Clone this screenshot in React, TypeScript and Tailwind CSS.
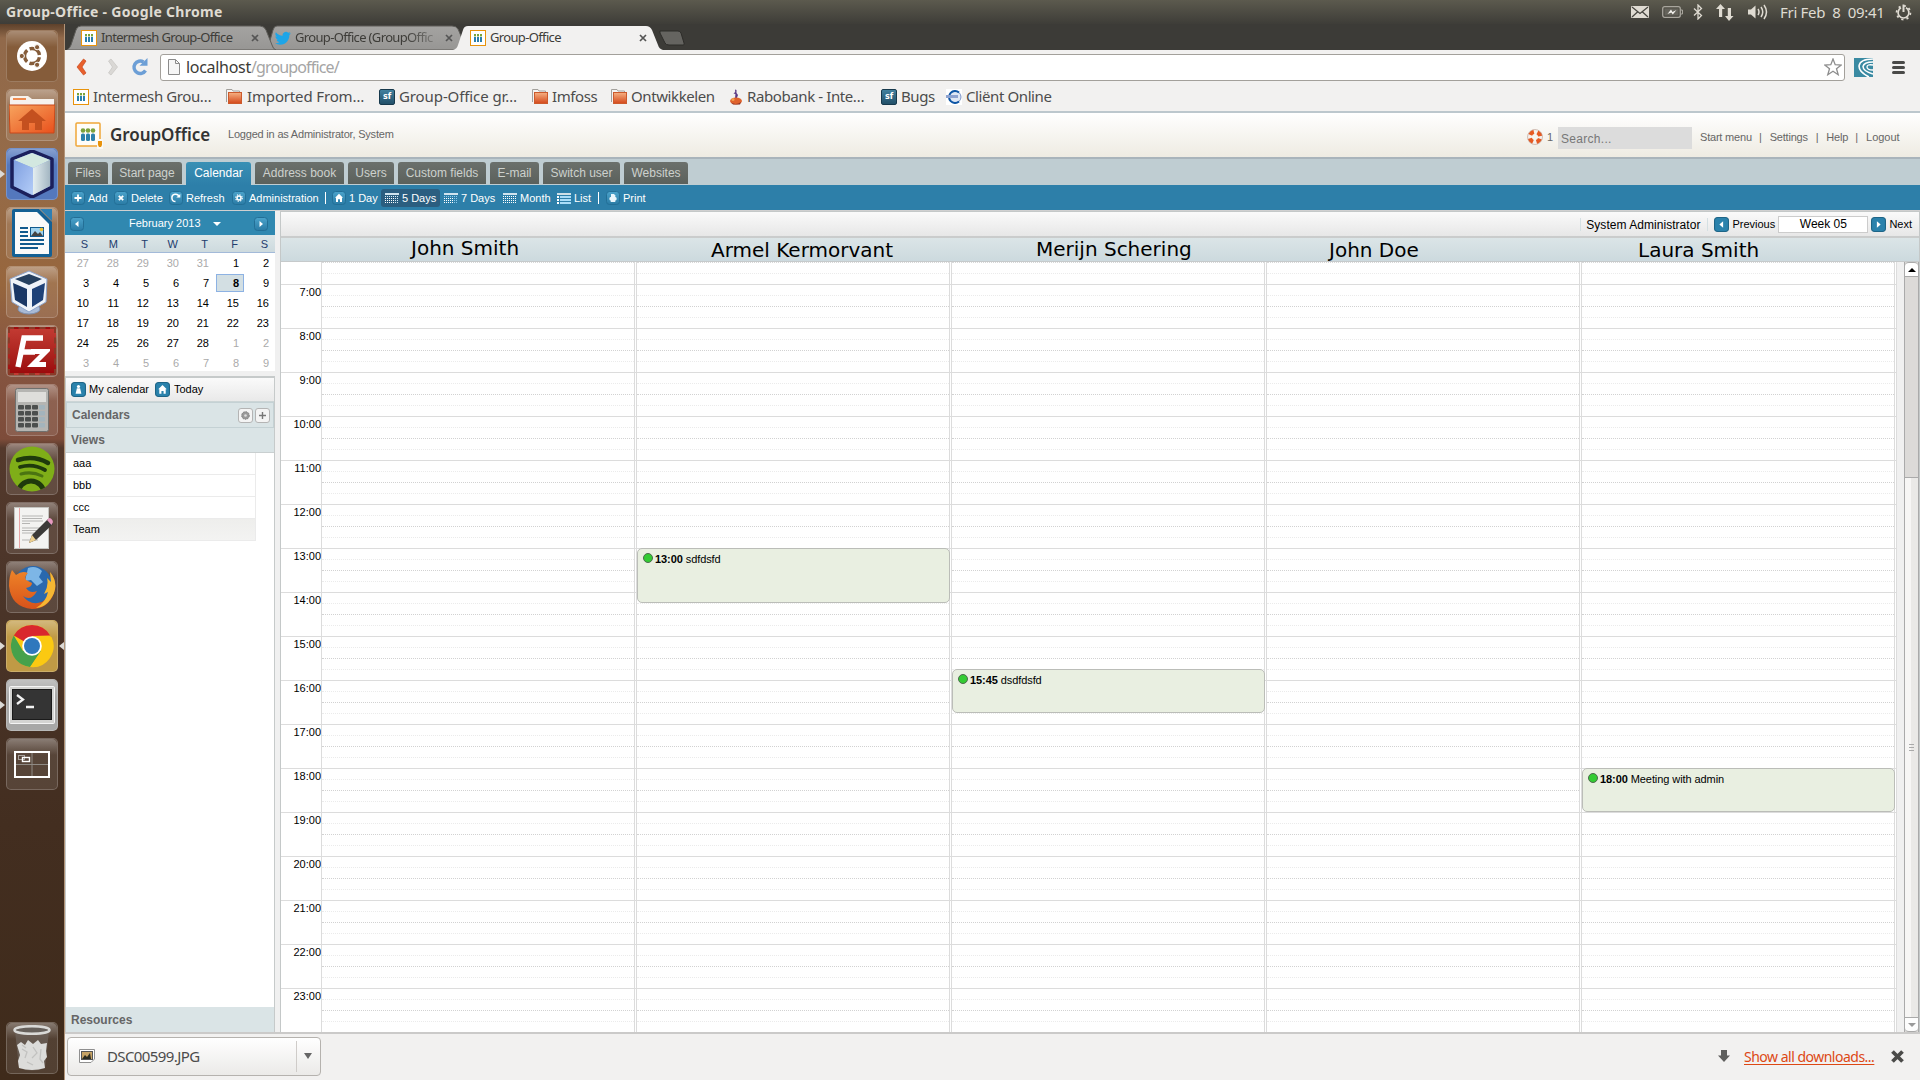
import React from "react";

const UI = "font-['Noto_Sans',sans-serif]";
const HOURS = [7, 8, 9, 10, 11, 12, 13, 14, 15, 16, 17, 18, 19, 20, 21, 22, 23];

/* ---------- Small icons ---------- */

function PeopleIcon({ size = 16 }: { size?: number }) {
  return (
    <svg width={size} height={size} viewBox="0 0 16 16" className="shrink-0">
      <rect x="0.5" y="0.5" width="15" height="15" fill="#fff" stroke="#e8930c" />
      {[4, 7, 10].map((x) => (
        <g key={x}>
          <rect x={x} y="4" width="2" height="2.4" fill="#7aa33a" />
          <rect x={x} y="7" width="2" height="5" fill="#2a7fae" />
        </g>
      ))}
    </svg>
  );
}

function TwitterIcon() {
  return (
    <svg width="16" height="16" viewBox="0 0 24 24" className="shrink-0" fill="#1da5e8">
      <path d="M23.6 4.9c-.9.4-1.8.7-2.8.8 1-.6 1.8-1.6 2.1-2.7-.9.6-2 1-3.1 1.2A4.9 4.9 0 0 0 11.500 8.700 13.900 13.900 0 0 1 1.400 3.500a4.900 4.900 0 0 0 1.500 6.600c-.8 0-1.600-.2-2.200-.6v.1c0 2.300 1.700 4.300 3.900 4.800-.7.2-1.500.2-2.200.1.6 2 2.400 3.400 4.600 3.400A9.900 9.900 0 0 1 0 19.900a13.900 13.900 0 0 0 7.500 2.200c9.100 0 14-7.500 14-14v-.6c1-.7 1.800-1.600 2.100-2.600z" />
    </svg>
  );
}

function FolderIcon() {
  return (
    <svg width="16" height="15" viewBox="0 0 16 15" className="shrink-0">
      <defs>
        <linearGradient id="bf" x1="0" y1="0" x2="0" y2="1">
          <stop offset="0" stopColor="#f6b183" />
          <stop offset="1" stopColor="#d4481a" />
        </linearGradient>
      </defs>
      <path d="M0.5 13V0.5H6L7 2H13.5V6" fill="#f4f3f2" stroke="#a3a09c" />
      <rect x="2.5" y="3.5" width="13" height="11" fill="url(#bf)" stroke="#cc5a2c" />
    </svg>
  );
}

function SfIcon() {
  return (
    <span className="flex h-4 w-4 shrink-0 items-center justify-center rounded-[2px] border border-[#17394d] bg-linear-to-b from-[#41819f] to-[#235069] font-['DejaVu_Sans',sans-serif] text-[8px] leading-none font-bold tracking-normal text-white">
      sf
    </span>
  );
}

function RaboIcon() {
  return (
    <svg width="14" height="16" viewBox="0 0 14 16" className="shrink-0">
      <path d="M6 0.5L7.5 1V4L9 6L7.5 10H6L6.4 5L4.5 4.5L6.2 3z" fill="#5b3a86" />
      <ellipse cx="7" cy="12" rx="6" ry="3.5" fill="#e0622c" />
      <path d="M2 13.5Q7 16.5 12 13L11 15.5H4z" fill="#8e3325" />
      <circle cx="4" cy="10.5" r="1.5" fill="#f0a050" />
    </svg>
  );
}

function ClientIcon() {
  return (
    <svg width="16" height="16" viewBox="0 0 16 16" className="shrink-0">
      <rect width="16" height="16" fill="#fff" />
      <circle cx="9" cy="8" r="6" fill="#dfe7f4" stroke="#7b93c8" strokeWidth="1" />
      <path d="M13 3.5A6 6 0 1 0 13 12.5" fill="none" stroke="#0d55a5" strokeWidth="2" />
      <rect x="0" y="6" width="12" height="3" fill="#8ea3d0" />
    </svg>
  );
}

function CloseX() {
  return (
    <svg width="8" height="8" viewBox="0 0 8 8" className="shrink-0" stroke="#555" strokeWidth="1.7">
      <path d="M1 1L7 7M7 1L1 7" />
    </svg>
  );
}

type Glyph = "add" | "delete" | "refresh" | "gear" | "home" | "print" | "prev" | "next" | "user";

function BlueButton({ glyph, size = 14, bright = false }: { glyph: Glyph; size?: number; bright?: boolean }) {
  return (
    <svg width={size} height={size} viewBox="0 0 14 14" className="shrink-0">
      <defs>
        <linearGradient id="bb" x1="0" y1="0" x2="0" y2="1">
          <stop offset="0" stopColor="#4ba3cb" />
          <stop offset="1" stopColor="#2a7ba5" />
        </linearGradient>
      </defs>
      <rect x="0.5" y="0.5" width="13" height="13" rx="3" fill={bright ? "#2a82ac" : "url(#bb)"} stroke={bright ? "#1e6587" : "#236f96"} />
      {glyph === "add" && <path d="M7 3.500V10.500M3.500 7H10.500" stroke="#fff" strokeWidth="1.8" />}
      {glyph === "delete" && <path d="M4.800 4.800L9.200 9.200M9.200 4.800L4.800 9.200" stroke="#fff" strokeWidth="1.8" />}
      {glyph === "refresh" && (
        <g>
          <path d="M6.500 10.500A3.600 3.600 0 1 1 10 6" fill="none" stroke="#fff" strokeWidth="1.5" />
          <path d="M7.300 6.500H11.300V3z" fill="#fff" />
        </g>
      )}
      {glyph === "gear" && (
        <g fill="none" stroke="#fff">
          <circle cx="7" cy="7" r="2" strokeWidth="1.5" />
          <circle cx="7" cy="7" r="3.3" strokeWidth="1.1" strokeDasharray="1.3 1.29" />
        </g>
      )}
      {glyph === "home" && <path d="M7 2.800L11 6.800H10V11H8V8.300H6V11H4V6.800H3z" fill="#fff" />}
      {glyph === "print" && (
        <g fill="#eaf6fc">
          <path d="M5 3H8L9.300 4.500V6H5z" />
          <rect x="3.5" y="6" width="7" height="3.5" rx="1.3" />
          <rect x="4.7" y="9" width="4.6" height="2" />
        </g>
      )}
      {glyph === "prev" && <path d="M8.500 4V10L5 7z" fill="#fff" />}
      {glyph === "next" && <path d="M5.500 4V10L9 7z" fill="#fff" />}
      {glyph === "user" && (
        <g fill="#fff">
          <circle cx="7" cy="4.2" r="1.5" />
          <path d="M5.500 5.800H8.500L9.700 11H4.300z" />
        </g>
      )}
    </svg>
  );
}

function GridIcon({ tint }: { tint: string }) {
  return (
    <svg width="14" height="11" viewBox="0 0 14 11" className="shrink-0" shapeRendering="crispEdges">
      <rect width="14" height="2" fill="#cfe3ee" />
      {[3, 5, 7, 9].map((y, r) =>
        [0, 2, 4, 6, 8, 10, 12].map((x, c) => (
          <rect key={`${x}-${y}`} x={x} y={y} width="1" height="1" fill={r > 0 && c < 5 ? "#fff" : tint} />
        ))
      )}
    </svg>
  );
}

function ListIcon() {
  return (
    <svg width="14" height="11" viewBox="0 0 14 11" className="shrink-0">
      <rect width="14" height="2" fill="#cfdfe6" />
      {[3, 6, 9].map((y) => (
        <g key={y}>
          <rect y={y} width="2" height="2" fill="#fff" />
          <rect x="3" y={y} width="11" height="2" fill="#a9dcf8" />
        </g>
      ))}
    </svg>
  );
}

/* ---------- Desktop chrome ---------- */

function TopPanel() {
  return (
    <div className={`flex h-6 items-center bg-linear-to-b from-[#5c5a4e] to-[#3e3d38] pl-[6px] text-[#dfdbd2] ${UI}`}>
      <span className="w-[1625px] text-[14px] leading-[20px] font-bold tracking-[0.3px] whitespace-nowrap">
        Group-Office - Google Chrome
      </span>
      <svg width="18" height="12" viewBox="0 0 18 12">
        <rect width="18" height="12" rx="1" fill="#dfdbd2" />
        <path d="M1 1L9 7.500L17 1M1 11L6.500 6M17 11L11.500 6" fill="none" stroke="#45443e" strokeWidth="1.2" />
      </svg>
      <svg width="21" height="12" viewBox="0 0 21 12" className="ml-[13px]">
        <rect x="0.7" y="0.7" width="17.6" height="10.6" rx="2" fill="none" stroke="#a8a59d" strokeWidth="1.3" />
        <rect x="2.5" y="2.5" width="14" height="7" fill="#65635b" />
        <path d="M19 4H20.500V8H19" fill="none" stroke="#a8a59d" />
        <path d="M5.500 8L9 3.500L10.500 6L14.500 4L10.800 8.500L9.300 6.500z" fill="#f4f2ee" />
      </svg>
      <svg width="10" height="16" viewBox="0 0 10 16" className="ml-[10px]" fill="none" stroke="#dfdbd2" strokeWidth="1.3">
        <path d="M1 4.500L8.500 11.500L5 15V1L8.500 4.500L1 11.500" />
      </svg>
      <svg width="18" height="17" viewBox="0 0 18 17" className="ml-[13px]" fill="#dfdbd2">
        <path d="M4.500 0L9 5H6.200V13H3V5H0z" />
        <path d="M13 17L17.500 12H15V4H11.800V12H9z" />
      </svg>
      <svg width="21" height="16" viewBox="0 0 21 16" className="ml-[14px]">
        <path d="M0 5.500H3L7.500 1.500V14.500L3 10.500H0z" fill="#dfdbd2" />
        <path d="M10 5Q12 8 10 11M13 3Q16.500 8 13 13M16 1Q21 8 16 15" fill="none" stroke="#dfdbd2" strokeWidth="1.5" />
      </svg>
      <span className="ml-[11px] w-[105px] text-[15px] leading-[20px] tracking-[-0.3px] whitespace-pre">Fri Feb  8  09:41</span>
      <svg width="17" height="17" viewBox="0 0 17 17" className="ml-[10px]" fill="none" stroke="#dfdbd2">
        <circle cx="8.5" cy="8.7" r="6.9" strokeWidth="1.8" strokeDasharray="2.2 3.22" />
        <path d="M6 3.800A5.400 5.400 0 1 0 11 3.800" strokeWidth="1.7" />
        <path d="M8.500 0.500V8" strokeWidth="2" />
      </svg>
    </div>
  );
}

function Tile({ children, bg = "bg-white/10", left, right }: { children: React.ReactNode; bg?: string; left?: boolean; right?: boolean }) {
  return (
    <div className={`relative flex h-[52px] w-[52px] shrink-0 items-center justify-center rounded-[5px] border border-white/20 ${bg}`}>
      <div className="absolute inset-x-0 top-0 h-4 rounded-t-[5px] bg-linear-to-b from-white/30 to-transparent" />
      <div className="relative">{children}</div>
      {left && <div className="absolute top-[21px] -left-[7px] border-y-4 border-l-5 border-y-transparent border-l-[#dcdad6]" />}
      {right && <div className="absolute top-[21px] -right-[7px] border-y-4 border-r-5 border-y-transparent border-r-[#dcdad6]" />}
    </div>
  );
}

function Launcher() {
  return (
    <aside className="flex w-[65px] shrink-0 flex-col items-start gap-[7px] border-r border-[#b29478] bg-[linear-gradient(180deg,#5d412b_0px,#91694a_14px,#956b48_150px,#97663d_260px,#875642_330px,#7d4c3a_415px,#54392c_424px,#4b3529_560px,#432e20_800px,#3f2b1b_1056px)] pt-[6px] pl-[6px]">
      <Tile bg="bg-[#855c3a]">
        <svg width="32" height="32" viewBox="0 0 32 32">
          <circle cx="16" cy="16" r="15" fill="#fff" />
          <circle cx="16" cy="16" r="7.5" fill="none" stroke="#855c3a" strokeWidth="3.4" strokeDasharray="13 2.7" strokeDashoffset="-1.3" />
          {[[5.8, 16], [21.1, 7.2], [21.1, 24.8]].map(([x, y]) => (
            <circle key={`${x}${y}`} cx={x} cy={y} r="2.6" fill="#855c3a" stroke="#fff" strokeWidth="1" />
          ))}
        </svg>
      </Tile>
      <Tile>
        <svg width="46" height="40" viewBox="0 0 46 40">
          <defs>
            <linearGradient id="lf" x1="0" y1="0" x2="1" y2="1">
              <stop offset="0" stopColor="#f7a45e" />
              <stop offset="1" stopColor="#e9501c" />
            </linearGradient>
          </defs>
          <path d="M1 12V3Q1 1 3 1H19L23 4H45V12z" fill="#f6f2ee" />
          <rect x="4" y="3" width="13" height="2" fill="#ee8a50" />
          <path d="M0 10H46L45 38H1z" fill="url(#lf)" stroke="#c8481a" />
          <path d="M23 14L37 26H33V35H26V28H20V35H13V26H9z" fill="#c4501f" />
        </svg>
      </Tile>
      <Tile bg="bg-[#5478bd]" left>
        <svg width="46" height="48" viewBox="0 0 46 48">
          <defs>
            <linearGradient id="nbl" x1="0" y1="0" x2="1" y2="1">
              <stop offset="0" stopColor="#7f9fe0" />
              <stop offset="1" stopColor="#b4cdf8" />
            </linearGradient>
            <linearGradient id="nbr" x1="0" y1="0" x2="1" y2="0">
              <stop offset="0" stopColor="#e4eef0" />
              <stop offset="1" stopColor="#a3b6c2" />
            </linearGradient>
          </defs>
          <path d="M23 1L43 9V37L23 47L3 37V9z" fill="#8aa8e0" stroke="#1b1f5c" strokeWidth="3.5" strokeLinejoin="round" />
          <path d="M23 3L41 10L24 18L5 10z" fill="#d3e8e0" />
          <path d="M5 10L24 18V45L5 36z" fill="url(#nbl)" />
          <path d="M41 10L24 18V45L41 36z" fill="url(#nbr)" />
        </svg>
      </Tile>
      <Tile>
        <svg width="40" height="48" viewBox="0 0 40 48">
          <path d="M2 0H27L40 13V46Q40 48 38 48H2Q0 48 0 46V2Q0 0 2 0z" fill="#146094" />
          <path d="M3 3H25L37 15V45H3z" fill="#fafafa" />
          <path d="M28 0H40V12z" fill="#2f7fb3" />
          <path d="M8 19H16M8 23H16M8 27H16M8 31H32M8 35H32M8 39H26" stroke="#115a8e" strokeWidth="2" />
          <rect x="18.5" y="18.5" width="13" height="9" fill="#9fd2ef" stroke="#115a8e" />
          <path d="M19 27L23 22L26 25L28 23L31 27z" fill="#444" />
          <circle cx="29.5" cy="20.5" r="1.8" fill="#f1c232" />
        </svg>
      </Tile>
      <Tile>
        <svg width="40" height="45" viewBox="0 0 40 45" className="mr-[6px]">
          <ellipse cx="20" cy="39" rx="11" ry="5" fill="#a9bad6" stroke="#7d91b4" />
          <path d="M20 1L38 9L37 32L20 42L3 32L1 9z" fill="#eff3f9" stroke="#8ea5cc" />
          <path d="M20 4L33 9L20 15L6 9z" fill="#26405f" />
          <path d="M4 13L18 19V37L6 30z" fill="#1a3765" />
          <path d="M36 13L23 19V37L34 30z" fill="#1f4278" />
        </svg>
      </Tile>
      <Tile>
        <div className="flex h-12 w-12 items-center justify-center border-2 border-dashed border-[#8b3a28] bg-linear-to-b from-[#c23a32] to-[#9c0a0c]">
          <svg width="36" height="36" viewBox="0 0 36 36" fill="none" stroke="#fff" strokeWidth="5.5">
            <path d="M4 34L10 5H29M7 19H21" />
            <path d="M17 18.500H32L19 31.500H32" strokeWidth="5" />
          </svg>
        </div>
      </Tile>
      <Tile>
        <svg width="34" height="44" viewBox="0 0 34 44">
          <rect x="0.5" y="0.5" width="33" height="43" rx="2" fill="#b5b5b2" stroke="#70706e" />
          <rect x="3" y="4" width="28" height="10" fill="#dededb" />
          {[17, 23, 29, 35].map((y) =>
            [3, 10, 17, 24].map((x) => (
              <rect key={`${x}${y}`} x={x} y={y} width="6" height="4.5" rx="1" fill={x === 24 ? "#a3b4bc" : "#4c4f4e"} />
            ))
          )}
        </svg>
      </Tile>
      <Tile>
        <svg width="46" height="46" viewBox="0 0 46 46">
          <defs>
            <clipPath id="sp"><circle cx="23" cy="23" r="22.5" /></clipPath>
          </defs>
          <circle cx="23" cy="23" r="22.5" fill="#7fae18" />
          <g fill="none" stroke="#1f3a0c" strokeLinecap="round" clipPath="url(#sp)">
            <path d="M9 14Q25 9 39 17" strokeWidth="4.5" />
            <path d="M11 21Q24 17 36 24" strokeWidth="3.8" />
            <path d="M12 28Q23 25 33 30" strokeWidth="3" stroke="#4b7411" />
            <circle cx="22" cy="48" r="13" strokeWidth="5" />
          </g>
        </svg>
      </Tile>
      <Tile>
        <svg width="40" height="42" viewBox="0 0 40 42" className="ml-[3px]">
          <rect x="0.5" y="0.5" width="34" height="41" fill="#f3f3f1" stroke="#c4c4c0" />
          <path d="M5.500 1V41" stroke="#e7a5a5" />
          <path d="M8 9H29M8 11.500H28M8 14H29M8 16.500H16M8 21H28M8 23.500H28M8 26H20M8 33H24" stroke="#b5b5b3" />
          <path d="M15 36L18 28L34 12L39 17L22 33z" fill="#3b3a38" />
          <path d="M15 36L18 28L22 33z" fill="#eccf8f" />
          <path d="M33 13L35 11Q38 11 39 15L37.500 18z" fill="#e79ac0" />
        </svg>
      </Tile>
      <Tile>
        <svg width="48" height="46" viewBox="0 0 48 46">
          <defs>
            <linearGradient id="ffx" x1="0" y1="0" x2="0" y2="1">
              <stop offset="0" stopColor="#ee8428" />
              <stop offset="1" stopColor="#d8521a" />
            </linearGradient>
          </defs>
          <circle cx="25" cy="21" r="19" fill="#2968ae" />
          <path d="M20 4Q28 1 34 7L31 13L35 18L29 22L23 16L17 17z" fill="#7db6e6" />
          <path d="M4 6L8 11Q14 6 20 9Q16 12 18 16L24 19Q24 23 18 24Q22 30 29 27Q23 38 15 32Q22 42 34 38Q43 33 44 17Q45 12 42 8Q50 18 46 29Q40 45 24 45Q3 43 1 22Q1 12 4 6z" fill="url(#ffx)" />
          <path d="M42 8Q50 18 46 29Q40 43 28 44Q38 38 40 28L36 30Q41 22 39 14L43 18z" fill="#f5b733" />
        </svg>
      </Tile>
      <Tile bg="bg-[#c09a45]" left right>
        <svg width="44" height="44" viewBox="0 0 44 44">
          <circle cx="22" cy="22" r="21" fill="#fbc912" />
          <path d="M22 22L3.800 11.500A21 21 0 0 1 40.200 11.500L22 12z" fill="#d9272e" />
          <path d="M3.800 11.500A21 21 0 0 0 20 43L31 27L22 22L13 27z" fill="#46a14b" />
          <path d="M31 27L20.500 43A21 21 0 0 0 41.500 13H22z" fill="#fbc912" />
          <circle cx="22" cy="22" r="9.8" fill="#fff" />
          <circle cx="22" cy="22" r="8" fill="#2f78bd" />
        </svg>
      </Tile>
      <Tile bg="bg-[#a8a8a7]" left>
        <svg width="46" height="38" viewBox="0 0 46 38">
          <rect x="0.5" y="0.5" width="45" height="37" rx="1" fill="#d4d4d2" stroke="#f4f4f4" />
          <rect x="3.5" y="3.5" width="39" height="30" fill="#343434" stroke="#1b1b1b" />
          <path d="M8 9L14 13.500L8 18M17 21H25" fill="none" stroke="#f2f2f2" strokeWidth="2.3" />
        </svg>
      </Tile>
      <Tile>
        <svg width="36" height="27" viewBox="0 0 36 27" fill="none">
          <path d="M18 1V26M1 13.500H35" stroke="#8f8a84" />
          <rect x="1" y="1" width="34" height="25" stroke="#fff" strokeWidth="2" />
          <rect x="4.5" y="4.5" width="6" height="4" stroke="#a8a29c" />
          <rect x="8.5" y="6.5" width="7" height="4" stroke="#fff" strokeWidth="1.4" />
        </svg>
      </Tile>
      <div className="mt-auto mb-[6px]">
        <Tile>
          <svg width="38" height="46" viewBox="0 0 38 46">
            <path d="M2 6L6 43Q19 48 32 43L36 6z" fill="#6d645c" fillOpacity="0.7" />
            <path d="M4 20L8 17L12 20L15 15L20 19L25 15L28 19L34 18L33 26L34 32L31 36L32 43Q19 47 6 43L5 36L7 30z" fill="#dcdcda" />
            <path d="M9 24L14 27L12 33M20 22L24 28L19 33M28 24L27 34L30 38M14 37L20 40M9 20L13 23" fill="none" stroke="#c2c2c0" strokeWidth="1.3" />
            <ellipse cx="19" cy="5" rx="17.5" ry="3.8" fill="#66605b" stroke="#d9d9d7" strokeWidth="2.5" />
          </svg>
        </Tile>
      </div>
    </aside>
  );
}

/* ---------- Browser ---------- */

function BrowserTabs() {
  return (
    <div className={`relative flex h-[26px] items-center bg-[#3c3b37] pt-[2px] text-[13px] tracking-[-0.65px] text-[#3d3c38] ${UI}`}>
      <svg width="640" height="26" viewBox="0 0 640 26" className="absolute top-0 left-0">
        <defs>
          <linearGradient id="tb" x1="0" y1="0" x2="0" y2="1">
            <stop offset="0" stopColor="#a4a3a1" />
            <stop offset="1" stopColor="#979694" />
          </linearGradient>
        </defs>
        <path d="M199 26Q203 24 204 20L208 6Q209 2 212 2H387Q391 2 393 5L402 26z" fill="url(#tb)" stroke="#5e5d59" />
        <path d="M2 26Q5 24 6 21L11 6Q12 2 16 2H195Q199 2 201 6L207 21Q208 25 211 26z" fill="url(#tb)" stroke="#5e5d59" />
        <path d="M388 26Q392 25 393 21L398 6Q399 2 403 2H581Q585 2 587 6L593 21Q594 25 598 26z" fill="#f2f1f0" />
        <path d="M595 7H613Q615 7 616 9L619 19Q620 21 618 21H604Q601 21 600 19L595 9z" fill="#656460" stroke="#2d2c29" />
      </svg>
      <div className="relative ml-[16px] flex w-[194px] items-center">
        <PeopleIcon />
        <span className="ml-[4px] w-[150px] whitespace-nowrap">Intermesh Group-Office</span>
        <CloseX />
      </div>
      <div className="relative flex w-[195px] items-center">
        <TwitterIcon />
        <span className="ml-[4px] w-[142px] [mask-image:linear-gradient(90deg,#000_78%,rgba(0,0,0,0.25))] whitespace-nowrap">
          Group-Office (GroupOffic
        </span>
        <span className="ml-[8px] flex"><CloseX /></span>
      </div>
      <div className="relative flex items-center">
        <PeopleIcon />
        <span className="ml-[4px] w-[149px] whitespace-nowrap">Group-Office</span>
        <CloseX />
      </div>
    </div>
  );
}

function AddressBar() {
  return (
    <div className={`flex h-[34px] items-center bg-[#f2f1f0] ${UI}`}>
      <svg width="12" height="18" viewBox="0 0 12 18" className="ml-[11px]">
        <path d="M7.500 1L10 3L6 9L10 15L7.500 17L1 9z" fill="#e8602c" stroke="#c9481c" strokeWidth="0.7" />
      </svg>
      <svg width="12" height="18" viewBox="0 0 12 18" className="ml-[19px]">
        <path d="M4 1L1.500 3L5.500 9L1.500 15L4 17L10.500 9z" fill="#dad8d5" stroke="#c6c4c1" strokeWidth="0.7" />
      </svg>
      <svg width="18" height="18" viewBox="0 0 18 18" className="ml-[12px]">
        <path d="M14.500 12.500A6.200 6.200 0 1 1 12.500 4" fill="none" stroke="#6d9fd6" strokeWidth="3.4" />
        <path d="M8.500 7.800H16.500V0z" fill="#6d9fd6" />
      </svg>
      <div className="ml-[11px] flex h-[27px] w-[1685px] items-center rounded-[3px] border border-[#a3a09b] bg-white text-[16px] text-[#3c3b37]">
        <svg width="12" height="16" viewBox="0 0 12 16" className="ml-[7px]">
          <path d="M0.500 0.500H7.500L11.500 4.500V15.500H0.500z" fill="#f6f6f6" stroke="#8b8b8b" />
          <path d="M7.500 0.500V4.500H11.500" fill="none" stroke="#8b8b8b" />
        </svg>
        <span className="ml-[6px] grow tracking-[-0.3px]">
          localhost<span className="tracking-[-0.85px] text-[#a5a5a5]">/groupoffice/</span>
        </span>
        <svg width="18" height="18" viewBox="0 0 18 18" className="mr-[2px]">
          <path d="M9 1L11.200 6.700L17.300 7L12.500 10.800L14.200 16.700L9 13.300L3.800 16.700L5.500 10.800L0.700 7L6.800 6.700z" fill="#fff" stroke="#8d8d8d" strokeWidth="1.3" />
        </svg>
      </div>
      <svg width="19" height="19" viewBox="0 0 19 19" className="ml-[9px]">
        <rect width="19" height="19" fill="#3a8aa2" />
        <g fill="none" stroke="#fff">
          <path d="M19 1Q6 1 5 8Q5 14 15 19" strokeWidth="1.6" />
          <path d="M19 4Q10 4 9 8.500Q9 13 19 16" strokeWidth="1.5" />
          <path d="M19 7Q13 6 13 9Q13 12 19 12" strokeWidth="1.3" />
        </g>
      </svg>
      <div className="ml-[19px] flex w-[13px] flex-col gap-[2px]">
        <div className="h-[3px] rounded-xs bg-[#4a4a48]" />
        <div className="h-[3px] rounded-xs bg-[#4a4a48]" />
        <div className="h-[3px] rounded-xs bg-[#4a4a48]" />
      </div>
    </div>
  );
}

function Bookmark({ icon, label, width }: { icon: React.ReactNode; label: string; width: string }) {
  return (
    <div className={`flex items-center gap-[4px] whitespace-nowrap ${width}`}>
      {icon}
      <span>{label}</span>
    </div>
  );
}

function Bookmarks() {
  return (
    <div className={`flex h-[29px] items-center border-b-2 border-[#bcc7cd] bg-[#f2f1f0] pb-[2px] pl-[8px] text-[15px] tracking-[-0.4px] text-[#4c4c4c] ${UI}`}>
      <Bookmark icon={<PeopleIcon />} label="Intermesh Grou…" width="w-[153px]" />
      <Bookmark icon={<FolderIcon />} label="Imported From…" width="w-[153px] tracking-[-0.15px] gap-[5px]" />
      <Bookmark icon={<SfIcon />} label="Group-Office gr…" width="w-[153px] tracking-[-0.1px]" />
      <Bookmark icon={<FolderIcon />} label="Imfoss" width="w-[79px]" />
      <Bookmark icon={<FolderIcon />} label="Ontwikkelen" width="w-[118px]" />
      <Bookmark icon={<RaboIcon />} label="Rabobank - Inte…" width="w-[152px]" />
      <Bookmark icon={<SfIcon />} label="Bugs" width="w-[65px]" />
      <Bookmark icon={<ClientIcon />} label="Cliënt Online" width="w-[120px]" />
    </div>
  );
}

/* ---------- Groupware page ---------- */

function PageHeader() {
  return (
    <header className="flex h-[46px] items-center border-b-2 border-[#a9b4bb] bg-linear-to-b from-white to-[#eeebe2] text-[11px] tracking-[-0.2px] text-[#666]">
      <svg width="28" height="27" viewBox="0 0 28 27" className="mt-[1px] ml-[10px]">
        <rect x="1" y="1" width="24" height="23" rx="1" fill="#fffdf9" stroke="#f0a637" strokeWidth="1.5" />
        {[7.5, 12.5, 17.5].map((x) => (
          <g key={x}>
            <circle cx={x + 0.5} cy="8.5" r="2.3" fill="#7da23d" />
            <rect x={x - 1.5} y="11.5" width="4" height="7.5" rx="1.5" fill="#2d81ab" />
          </g>
        ))}
        <rect x="22" y="17" width="6" height="10" fill="#fbf9f4" />
        <path d="M23 19H27V23L26 25H24L23 23z" fill="#e8930c" />
      </svg>
      <span className="ml-[7px] w-[118px] font-['Noto_Sans',sans-serif] text-[17px] font-semibold tracking-[-0.05px] text-[#333]">GroupOffice</span>
      <span className="grow pb-[2px]">Logged in as Administrator, System</span>
      <svg width="16" height="16" viewBox="0 0 16 16" className="mt-[4px]" fill="none">
        <circle cx="8" cy="8" r="5.3" stroke="#f5f0ec" strokeWidth="4.6" />
        <circle cx="8" cy="8" r="5.3" stroke="#e65a22" strokeWidth="4.2" strokeDasharray="4.6 3.72" strokeDashoffset="-1.9" />
        <circle cx="8" cy="8" r="7.5" stroke="#b9988c" strokeWidth="0.6" />
      </svg>
      <span className="mt-[4px] ml-[4px] w-[11px]">1</span>
      <div className="mt-[5px] flex h-[22px] w-[134px] items-center bg-[#dcdcdc] pt-[2px] pl-[3px] text-[12px] tracking-[0.3px] text-[#777]">Search...</div>
      <div className="mt-[4px] ml-[8px] flex w-[220px] gap-[8px]">
        <span className="w-[51px] whitespace-nowrap">Start menu</span>
        <span>|</span>
        <span className="w-[39px]">Settings</span>
        <span className="-ml-[1px]">|</span>
        <span className="w-[21px]">Help</span>
        <span>|</span>
        <span className="tracking-normal">Logout</span>
      </div>
    </header>
  );
}

const MODULES: [string, string][] = [
  ["Files", "w-[40px]"],
  ["Start page", "w-[70px]"],
  ["Calendar", "w-[65px]"],
  ["Address book", "w-[89px]"],
  ["Users", "w-[46px]"],
  ["Custom fields", "w-[88px]"],
  ["E-mail", "w-[49px]"],
  ["Switch user", "w-[77px]"],
  ["Websites", "w-[64px]"],
];

function ModuleTabs() {
  return (
    <nav className="flex h-[26px] items-end gap-[4px] bg-[#bfcdd2] pl-[3px] text-[12px]">
      {MODULES.map(([label, width]) => (
        <div
          key={label}
          className={`flex items-center justify-center rounded-t-[3px] whitespace-nowrap ${width} ${
            label === "Calendar"
              ? "h-[23px] bg-linear-to-b from-[#3990b5] to-[#2d7fa9] pb-px text-white"
              : "mb-px h-[22px] bg-linear-to-b from-[#6b706c] to-[#5b615c] text-[#cdd1cd]"
          }`}
        >
          {label}
        </div>
      ))}
    </nav>
  );
}

function Action({ icon, label, width, active }: { icon: React.ReactNode; label: string; width: string; active?: boolean }) {
  return (
    <div className={`flex items-center gap-[3px] whitespace-nowrap ${width} ${active ? "-mx-[4px] h-[18px] rounded-[3px] bg-[#2b5e80] px-[4px]" : ""}`}>
      {icon}
      <span>{label}</span>
    </div>
  );
}

function ActionBar() {
  return (
    <div className="flex h-[26px] items-center border-b border-[#d0d0d0] bg-[#2d7fa9] pt-px pl-[6px] text-[11px] text-white">
      <Action icon={<BlueButton glyph="add" />} label="Add" width="w-[43px]" />
      <Action icon={<BlueButton glyph="delete" />} label="Delete" width="w-[55px]" />
      <Action icon={<BlueButton glyph="refresh" />} label="Refresh" width="w-[63px]" />
      <Action icon={<BlueButton glyph="gear" />} label="Administration" width="w-[92px]" />
      <div className="mr-[6px] ml-px h-[12px] w-px bg-white" />
      <Action icon={<BlueButton glyph="home" />} label="1 Day" width="w-[53px]" />
      <Action icon={<GridIcon tint="#d6ecf8" />} label="5 Days" width="w-[59px]" active />
      <div className="w-[8px]" />
      <Action icon={<GridIcon tint="#8ccbee" />} label="7 Days" width="w-[59px]" />
      <Action icon={<GridIcon tint="#ffffff" />} label="Month" width="w-[54px]" />
      <Action icon={<ListIcon />} label="List" width="w-[41px]" />
      <div className="mr-[7px] h-[12px] w-px bg-white" />
      <Action icon={<BlueButton glyph="print" />} label="Print" width="w-[50px]" />
    </div>
  );
}

const WEEKS = [
  [27, 28, 29, 30, 31, 1, 2],
  [3, 4, 5, 6, 7, 8, 9],
  [10, 11, 12, 13, 14, 15, 16],
  [17, 18, 19, 20, 21, 22, 23],
  [24, 25, 26, 27, 28, 1, 2],
  [3, 4, 5, 6, 7, 8, 9],
];

function DatePicker() {
  return (
    <div className="h-[160px] bg-white">
      <div className="flex h-[24px] items-center bg-[#3088b0] pt-px pr-[7px] pl-[5px] text-[11px] text-white">
        <BlueButton glyph="prev" />
        <span className="ml-[45px] grow">
          February 2013
          <span className="ml-[12px] inline-block border-x-4 border-t-4 border-x-transparent border-t-white align-middle" />
        </span>
        <BlueButton glyph="next" />
      </div>
      <div className="grid h-[18px] grid-cols-7 items-center border-b border-[#a3bad9] bg-linear-to-b from-[#dce6e8] to-[#cddade] pt-px text-right text-[11px] text-[#233d6d]">
        {["S", "M", "T", "W", "T", "F", "S"].map((d, i) => (
          <span key={i} className="pr-[7px]">{d}</span>
        ))}
      </div>
      {WEEKS.map((week, w) => (
        <div key={w} className="grid h-[20px] grid-cols-7 items-center text-right text-[11px]">
          {week.map((day, d) => {
            const muted = (w === 0 && d < 5) || (w === 4 && d > 4) || w === 5;
            return w === 1 && d === 5 ? (
              <span key={d} className="ml-px flex h-[18px] w-[28px] items-center justify-end border border-[#8db2e3] bg-[#d3dfe3] pr-[4px] font-bold text-black">8</span>
            ) : (
              <span key={d} className={`pr-[6px] ${muted ? "text-[#aaa]" : "text-black"}`}>{day}</span>
            );
          })}
        </div>
      ))}
    </div>
  );
}

function Sidebar() {
  return (
    <div className="flex w-[210px] shrink-0 flex-col">
      <DatePicker />
      <div className="mt-[5px] flex grow flex-col border-t-2 border-r border-l border-[#c6caca] bg-white">
        <div className="flex h-[24px] items-center border-b border-[#ccd5d6] bg-linear-to-b from-[#fafafa] to-[#e9e9e9] pl-[5px] text-[11px] text-black">
          <BlueButton glyph="user" size={15} bright />
          <span className="ml-[3px] w-[66px]">My calendar</span>
          <BlueButton glyph="home" size={15} bright />
          <span className="ml-[4px]">Today</span>
        </div>
        <div className="flex h-[26px] items-center border border-[#c4d1d4] bg-[#dae4e6] pr-[3px] pl-[5px] text-[12px] font-bold text-[#666]">
          <span className="grow">Calendars</span>
          <svg width="15" height="15" viewBox="0 0 15 15">
            <rect x="0.5" y="0.5" width="14" height="14" rx="2.5" fill="#f4f4f4" stroke="#b4b4b4" />
            <circle cx="7.5" cy="7.5" r="3.8" fill="#999" stroke="#7c7c7c" strokeDasharray="1.5 1" />
            <circle cx="7.5" cy="7.5" r="1.3" fill="#ddd" />
          </svg>
          <svg width="15" height="15" viewBox="0 0 15 15" className="ml-[2px]">
            <rect x="0.5" y="0.5" width="14" height="14" rx="2.5" fill="#f4f4f4" stroke="#b4b4b4" />
            <path d="M7.500 4V11M4 7.500H11" stroke="#777" strokeWidth="1.4" />
          </svg>
        </div>
        <div className="flex h-[25px] items-center border-b border-[#c9cfd0] bg-[#dae4e6] pl-[5px] text-[12px] font-bold text-[#666]">Views</div>
        <div className="flex grow flex-col pl-px text-[11px] text-black">
          {["aaa", "bbb", "ccc", "Team"].map((v) => (
            <div
              key={v}
              className={`flex h-[22px] w-[189px] items-center border-r border-b border-[#ebebeb] pl-[6px] ${v === "Team" ? "bg-linear-to-b from-[#eeeeec] to-[#f3f3f2]" : ""}`}
            >
              {v}
            </div>
          ))}
        </div>
        <div className="flex h-[25px] items-center bg-[#dae4e6] pt-px pl-[5px] text-[12px] font-bold text-[#666]">Resources</div>
      </div>
    </div>
  );
}

type CalEvent = { top: string; height: string; time: string; title: string };
const PEOPLE = [
  { name: "John Smith", place: "pl-[90px] -mt-[3px]" },
  { name: "Armel Kermorvant", place: "pl-[75px]" },
  { name: "Merijn Schering", place: "pl-[85px] -mt-[1px]" },
  { name: "John Doe", place: "pl-[63px]" },
  { name: "Laura Smith", place: "pl-[57px]" },
];
const EVENTS: (CalEvent | null)[] = [
  null,
  { top: "top-[286px]", height: "h-[55px]", time: "13:00", title: "sdfdsfd" },
  { top: "top-[407px]", height: "h-[44px]", time: "15:45", title: "dsdfdsfd" },
  null,
  { top: "top-[506px]", height: "h-[44px]", time: "18:00", title: "Meeting with admin" },
];

function DayColumn({ event }: { event: CalEvent | null }) {
  return (
    <div className="relative w-[315px] shrink-0 border-l border-[#dcdcdc]">
      <div className="mr-[2px] h-[11px] border-t border-dotted border-[#d8d8d8]" />
      <div className="mr-[2px] h-[11px] border-t border-dotted border-[#ebebeb]" />
      {HOURS.map((h) => (
        <div key={h} className="h-[44px] border-t border-[#dcdcdc] pt-[10px]">
          <div className="mr-[2px] h-[11px] border-t border-dotted border-[#ebebeb]" />
          <div className="mr-[2px] h-[11px] border-t border-dotted border-[#d2d2d2]" />
          <div className="mr-[2px] h-[11px] border-t border-dotted border-[#ebebeb]" />
        </div>
      ))}
      <div className="absolute top-0 right-px h-full w-px bg-[#dcdcdc]" />
      {event && (
        <div className={`absolute left-0 flex w-[313px] items-start rounded-[5px] border border-[#bbbdb8] bg-[#e9efe1] pt-[4px] pl-[5px] text-[11px] leading-[13px] text-black ${event.top} ${event.height}`}>
          <span className="mr-[2px] h-[10px] w-[10px] rounded-full border border-[#4d6b4d] bg-[#33cc33]" />
          <span className="tracking-[-0.08px] whitespace-nowrap">
            <b>{event.time}</b> {event.title}
          </span>
        </div>
      )}
    </div>
  );
}

function Scrollbar() {
  return (
    <div className="flex w-[15px] shrink-0 flex-col border-x border-[#aaa] bg-[#dcdad8]">
      <div className="flex h-[15px] items-center justify-center rounded-t-[4px] border-t border-b border-[#aaa] bg-white">
        <div className="border-x-4 border-b-4 border-x-transparent border-b-black" />
      </div>
      <div className="h-[200px]" />
      <div className="flex grow flex-col items-center justify-center gap-[2px] border-t border-[#aaa] bg-linear-to-r from-[#f7f6f5] from-50% to-[#eae9e7] to-50%">
        <div className="h-px w-[5px] bg-[#aaa]" />
        <div className="h-px w-[5px] bg-[#aaa]" />
        <div className="h-px w-[5px] bg-[#aaa]" />
      </div>
      <div className="flex h-[15px] items-center justify-center rounded-b-[4px] border-t border-b border-[#aaa] bg-[#fdfdfd]">
        <div className="border-x-4 border-t-4 border-x-transparent border-t-[#999]" />
      </div>
    </div>
  );
}

function Schedule() {
  return (
    <main className="ml-[5px] flex grow flex-col overflow-hidden border-t border-r border-l border-[#c4c8c8] bg-white text-black">
      <div className="flex h-[26px] shrink-0 items-center justify-end border-b-2 border-[#cacccc] bg-linear-to-b from-[#fafafa] to-[#e7e7e7] pr-[6px] text-[11px]">
        <div className="flex h-[13px] w-[128px] items-center justify-center border-x border-[#d5e0e3] pt-[2px] pr-[2px] text-[12px] tracking-[0.04px] whitespace-nowrap">System Administrator</div>
        <span className="mr-[3px] ml-[6px] flex"><BlueButton glyph="prev" size={15} bright /></span>
        <span className="w-[46px]">Previous</span>
        <div className="flex h-[17px] w-[90px] items-center justify-center border border-[#ccc] bg-white text-[12px]">Week 05</div>
        <span className="mr-[3px] ml-[3px] flex"><BlueButton glyph="next" size={15} bright /></span>
        <span className="mr-px">Next</span>
      </div>
      <div className="flex h-[24px] shrink-0 items-center border-b border-[#c6cacb] bg-linear-to-b from-[#dbe5e7] to-[#ccd9de] pl-[40px] font-['DejaVu_Sans',sans-serif] text-[20px] leading-[22px]">
        {PEOPLE.map((p) => (
          <div key={p.name} className={`w-[315px] whitespace-nowrap ${p.place}`}>{p.name}</div>
        ))}
      </div>
      <div className="flex min-h-0 grow overflow-hidden">
        <div className="w-[40px] shrink-0 pt-[22px] text-right text-[11px] leading-[13px]">
          {HOURS.map((h) => (
            <div key={h} className="h-[44px] border-t border-[#dcdcdc] pt-px">{h}:00</div>
          ))}
        </div>
        {EVENTS.map((e, i) => (
          <DayColumn key={i} event={e} />
        ))}
        <div className="grow border-l border-[#dcdcdc] bg-[#f0f0f0]" />
        <Scrollbar />
      </div>
    </main>
  );
}

function DownloadBar() {
  return (
    <div className={`flex h-[48px] shrink-0 items-center border-t-2 border-[#cbcac9] bg-[#f2f1f0] pb-[2px] pl-[2px] ${UI}`}>
      <div className="flex h-[39px] w-[254px] items-center rounded-[4px] border border-[#b5b2ae] bg-linear-to-b from-white to-[#ebeae8] text-[15px] text-[#4c4c4c]">
        <svg width="16" height="14" viewBox="0 0 16 14" className="ml-[11px]">
          <path d="M0.500 0.500H15.500V10L12 13.500H0.500z" fill="#fff" stroke="#8f8f8f" />
          <rect x="2.5" y="2.5" width="11" height="8" fill="#c7a365" stroke="#555" />
          <path d="M3 10L6 6L8 8L11 4L12 10z" fill="#2b2b20" />
        </svg>
        <span className="ml-[12px] w-[189px] tracking-[-0.6px]">DSC00599.JPG</span>
        <div className="h-[31px] w-px bg-[#cfccc9]" />
        <div className="ml-[7px] border-x-[4px] border-t-[6px] border-x-transparent border-t-[#666]" />
      </div>
      <svg width="12" height="12" viewBox="0 0 12 12" className="ml-auto">
        <path d="M3 0H9V5.500H12L6 12L0 5.500H3z" fill="#5f5f5d" />
      </svg>
      <span className="ml-[14px] w-[130px] text-[14px] tracking-[-0.5px] whitespace-nowrap text-[#dd4814] underline underline-offset-2">Show all downloads...</span>
      <svg width="13" height="13" viewBox="0 0 13 13" className="mr-[16px] ml-[17px]" stroke="#4b4b49" strokeWidth="3.8">
        <path d="M1.500 1.500L11.500 11.500M11.500 1.500L1.500 11.500" />
      </svg>
    </div>
  );
}

export default function App() {
  return (
    <div className="flex h-[1080px] w-[1920px] flex-col overflow-hidden bg-[#f0f0f0] font-['Liberation_Sans',Arial,sans-serif] leading-normal">
      <TopPanel />
      <div className="flex min-h-0 grow">
        <Launcher />
        <div className="flex min-w-0 grow flex-col">
          <BrowserTabs />
          <AddressBar />
          <Bookmarks />
          <PageHeader />
          <ModuleTabs />
          <ActionBar />
          <div className="flex min-h-0 grow">
            <Sidebar />
            <Schedule />
          </div>
          <DownloadBar />
        </div>
      </div>
    </div>
  );
}
